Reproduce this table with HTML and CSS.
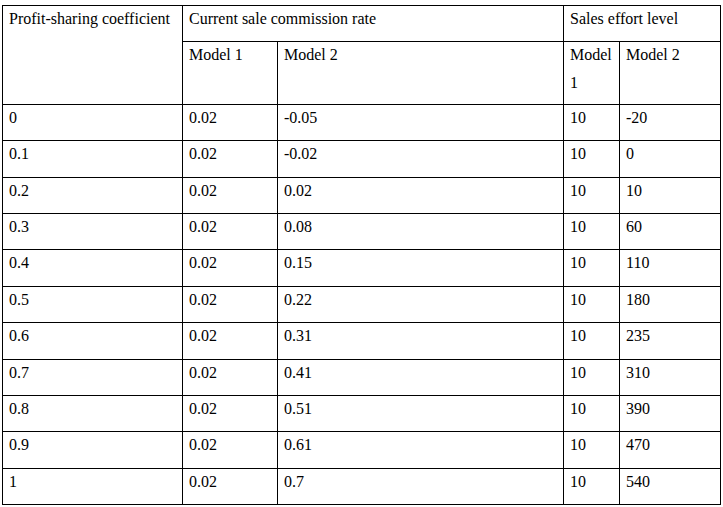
FILE: index.html
```html
<!DOCTYPE html>
<html>
<head>
<meta charset="utf-8">
<link rel="stylesheet" href="styles.css">
</head>
<body>
<div class="wrap">
<table class="grid">
  <colgroup>
    <col class="c1"><col class="c2"><col class="c3"><col class="c4"><col class="c5">
  </colgroup>
  <tr class="h1">
    <td rowspan="2"><div class="t">Profit-sharing coefficient</div></td>
    <td colspan="2"><div class="t">Current sale commission rate</div></td>
    <td colspan="2"><div class="t">Sales effort level</div></td>
  </tr>
  <tr class="h2">
    <td><div class="t">Model 1</div></td>
    <td><div class="t">Model 2</div></td>
    <td><div class="t">Model 1</div></td>
    <td><div class="t">Model 2</div></td>
  </tr>
  <tr><td><div class="t">0</div></td><td><div class="t">0.02</div></td><td><div class="t">-0.05</div></td><td><div class="t">10</div></td><td><div class="t">-20</div></td></tr>
  <tr><td><div class="t">0.1</div></td><td><div class="t">0.02</div></td><td><div class="t">-0.02</div></td><td><div class="t">10</div></td><td><div class="t">0</div></td></tr>
  <tr><td><div class="t">0.2</div></td><td><div class="t">0.02</div></td><td><div class="t">0.02</div></td><td><div class="t">10</div></td><td><div class="t">10</div></td></tr>
  <tr><td><div class="t">0.3</div></td><td><div class="t">0.02</div></td><td><div class="t">0.08</div></td><td><div class="t">10</div></td><td><div class="t">60</div></td></tr>
  <tr><td><div class="t">0.4</div></td><td><div class="t">0.02</div></td><td><div class="t">0.15</div></td><td><div class="t">10</div></td><td><div class="t">110</div></td></tr>
  <tr><td><div class="t">0.5</div></td><td><div class="t">0.02</div></td><td><div class="t">0.22</div></td><td><div class="t">10</div></td><td><div class="t">180</div></td></tr>
  <tr><td><div class="t">0.6</div></td><td><div class="t">0.02</div></td><td><div class="t">0.31</div></td><td><div class="t">10</div></td><td><div class="t">235</div></td></tr>
  <tr><td><div class="t">0.7</div></td><td><div class="t">0.02</div></td><td><div class="t">0.41</div></td><td><div class="t">10</div></td><td><div class="t">310</div></td></tr>
  <tr><td><div class="t">0.8</div></td><td><div class="t">0.02</div></td><td><div class="t">0.51</div></td><td><div class="t">10</div></td><td><div class="t">390</div></td></tr>
  <tr><td><div class="t">0.9</div></td><td><div class="t">0.02</div></td><td><div class="t">0.61</div></td><td><div class="t">10</div></td><td><div class="t">470</div></td></tr>
  <tr><td><div class="t">1</div></td><td><div class="t">0.02</div></td><td><div class="t">0.7</div></td><td><div class="t">10</div></td><td><div class="t">540</div></td></tr>
</table>
</div>
</body>
</html>
```
FILE: styles.css
```css
html, body {
  margin: 0;
  padding: 0;
  background: #fff;
}
.wrap {
  padding: 5px 0 0 2px;
}
.grid {
  border-collapse: collapse;
  table-layout: fixed;
  width: 718px;
  font-family: "Liberation Serif", "Times New Roman", serif;
  font-size: 16px;
  color: #000;
}
.c1 { width: 180px; }
.c2 { width: 95px; }
.c3 { width: 286px; }
.c4 { width: 56px; }
.c5 { width: 101px; }
.grid td {
  border: 1px solid #000;
  vertical-align: top;
  padding: 0 6px;
  line-height: 28px;
  overflow: hidden;
}
.grid .t {
  margin-top: -1px;
}
.grid tr { height: 36.36px; }
.grid tr.h1 { height: 36px; }
.grid tr.h2 { height: 63px; }
```
